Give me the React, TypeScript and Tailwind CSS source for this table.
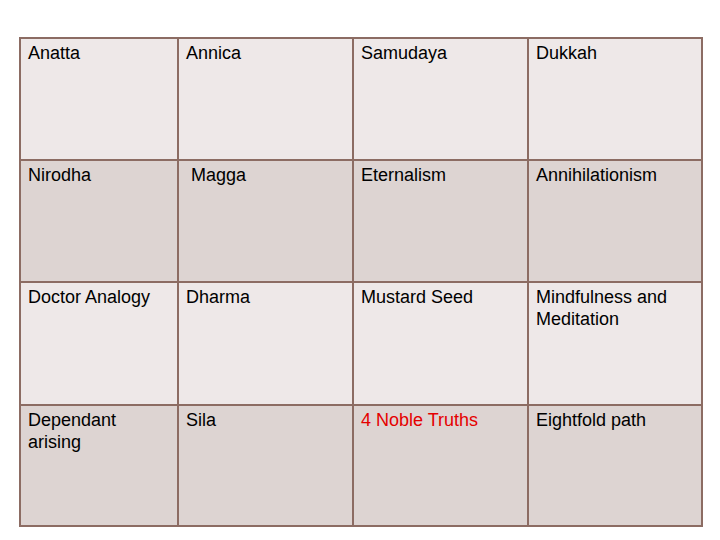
export default function App() {
  const rows: { text: string; red?: boolean }[][] = [
    [{ text: 'Anatta' }, { text: 'Annica' }, { text: 'Samudaya' }, { text: 'Dukkah' }],
    [{ text: 'Nirodha' }, { text: '\u00a0Magga' }, { text: 'Eternalism' }, { text: 'Annihilationism' }],
    [{ text: 'Doctor Analogy' }, { text: 'Dharma' }, { text: 'Mustard Seed' }, { text: 'Mindfulness and Meditation' }],
    [{ text: 'Dependant arising' }, { text: 'Sila' }, { text: '4 Noble Truths', red: true }, { text: 'Eightfold path' }],
  ];

  return (
    <div className="w-[720px] h-[540px] bg-white pt-[37px] pl-[19px]" style={{ fontFamily: '"Liberation Sans", Arial, sans-serif' }}>
      <div className="w-[684px] grid grid-cols-[156px_173px_173px_172px] grid-rows-[120px_120px_121px_119px] gap-[2px] p-[2px] bg-[#8c6c63]">
        {rows.map((row, r) =>
          row.map((cell, c) => (
            <div
              key={`${r}-${c}`}
              className={`px-[7px] pt-[3px] text-[18px] leading-[22px] ${r % 2 === 0 ? 'bg-[#eee8e8]' : 'bg-[#ddd4d2]'} ${cell.red ? 'text-[#e50000]' : 'text-black'}`}
            >
              {cell.text}
            </div>
          ))
        )}
      </div>
    </div>
  );
}
